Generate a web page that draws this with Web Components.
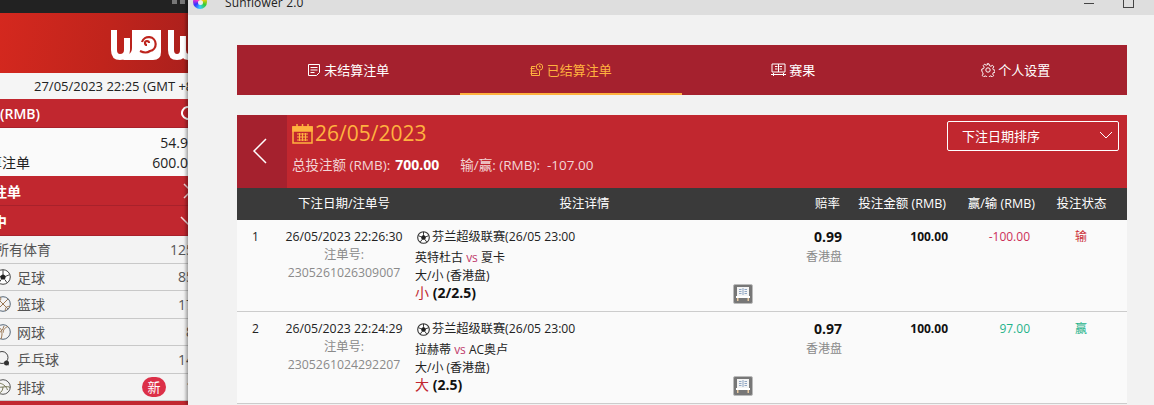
<!DOCTYPE html>
<html lang="zh">
<head>
<meta charset="utf-8">
<title>Sunflower 2.0</title>
<style>
    html, body { margin: 0; height: 405px; overflow: hidden; }
    body {
        display: flex;
        font-family: "Open Sans", "Noto Sans CJK SC", sans-serif;
        font-size: 13px;
    }
</style>
</head>
<body>
<side-panel></side-panel>
<app-window>
    <nav-bar>
        <nav-tab icon="list">未结算注单</nav-tab>
        <nav-tab icon="clock" active>已结算注单</nav-tab>
        <nav-tab icon="board">赛果</nav-tab>
        <nav-tab icon="gear">个人设置</nav-tab>
    </nav-bar>
    <date-head date="26/05/2023" stake="700.00" result="-107.00"></date-head>
    <bet-head></bet-head>
    <bet-row index="1" placed="26/05/2023 22:26:30" ticket="2305261026309007"
        home="英特杜古" away="夏卡" pick="小" line="(2/2.5)" odds="0.99" stake="100.00" profit="-100.00" status="输"></bet-row>
    <bet-row index="2" placed="26/05/2023 22:24:29" ticket="2305261024292207"
        home="拉赫蒂" away="AC奥卢" pick="大" line="(2.5)" odds="0.97" stake="100.00" profit="97.00" status="赢" won></bet-row>
</app-window>

<script>
// icons shared by the nav bar and the rows
const ICONS = {
    list: '<svg width="14" height="14" viewBox="0 0 14 14" fill="none" stroke="currentColor"><path d="M1.5 1.5h11v8l-3 3h-8z"/><path d="M3.5 4.5h7M3.5 7h7M3.5 9.5h4"/></svg>',
    clock: '<svg width="14" height="14" viewBox="0 0 14 14" fill="none" stroke="currentColor"><circle cx="9.5" cy="4" r="3.2"/><path d="M9.5 2.5V4h1.5"/><path d="M5.5 3.5H1.5v9h8V8M.5 5.5h4M.5 8h6M.5 10.5h7"/></svg>',
    board: '<svg width="15" height="14" viewBox="0 0 15 14" fill="none" stroke="currentColor"><path d="M1 1h13v8H1zM0 11.500h15M2.500 10v3M12.500 10v3M4 3.500h2.500M4 6h2.500M8.500 3.500H11M8.500 6H11M7.500 1v8"/></svg>',
    gear: '<svg width="14" height="14" viewBox="0 0 14 14" fill="none" stroke="currentColor"><circle cx="7" cy="7" r="2.200"/><path d="M6 .8h2l.4 1.800 1.500.7 1.600-1 1.300 1.500-1 1.500.5 1.500 1.700.4v2l-1.700.4-.6 1.500 1 1.500-1.400 1.300-1.500-1-1.500.6-.3 1.700H6l-.4-1.700-1.500-.6-1.500 1-1.400-1.400 1-1.500-.6-1.500L.8 8V6l1.800-.4.600-1.500-1-1.500 1.400-1.400 1.500 1 1.500-.6z"/></svg>',
    ball: '<svg width="13" height="13" viewBox="0 0 13 13"><circle cx="6.500" cy="6.500" r="5.800" fill="#fff" stroke="#333" stroke-width="1.100"/><path d="M6.500 3.800l2.600 1.900-1 3H4.900l-1-3z" fill="#222"/><path d="M6.500 1v2.800M9.100 5.700l2.500-1M8.100 8.700l1.500 2.200M4.900 8.700l-1.500 2.200M3.900 5.700l-2.500-1" stroke="#333" fill="none"/></svg>',
    sheet: '<svg width="14" height="14" viewBox="0 0 14 14"><path d="M1 0h12v9H1z" fill="#f4f4f4"/><path d="M7 1v7M3 2.500h2.500M3 4.500h2.500M3 6.500h2.500M8.500 2.500H11M8.500 4.500H11M8.500 6.500H11" stroke="#8fa6c4" fill="none"/><path d="M0 9h14v2H0z" fill="#fff"/><path d="M1 11h1.500v3H1zM11.500 11H13v3h-1.500z" fill="#e8c9a0"/></svg>'
};

class SidePanel extends HTMLElement {
    constructor() {
        super();
        this.attachShadow({ mode: 'open' });
        const sports = [
            ['足球', '85', '<circle cx="8" cy="8" r="7.300" fill="#fff" stroke="#444"/><path d="M8 5l3 2.200-1.100 3.400H6.100L5 7.200z" fill="#222"/><path d="M8 1v4M11 7.200l3.500-1.500M9.900 10.600l2 3M6.100 10.600l-2 3M5 7.200L1.500 5.700" stroke="#444" fill="none"/>'],
            ['篮球', '17', '<circle cx="8" cy="8" r="7.300" fill="none" stroke="#567"/><path d="M2.800 2.800l10.400 10.400M13.200 2.800L2.800 13.200M5.500 1.200c1 3-1 5-4.300 4.500M14.800 10.500c-3-.6-5 1.500-4.300 4.300" stroke="#975" fill="none"/>'],
            ['网球', '8', '<circle cx="8" cy="8" r="7.300" fill="none" stroke="#567"/><path d="M3 2.500c4 2 5 7 3 12.500M13 2.500c-4 1.500-5 4-4.500 6M2 10c3-1 6-4 7-8" stroke="#975" fill="none"/>'],
            ['乒乓球', '14', '<circle cx="7" cy="6.500" r="6" fill="none" stroke="#444"/><path d="M10 11l3.500 3" stroke="#444"/><circle cx="11.500" cy="12" r="2.500" fill="#333"/>'],
            ['排球', '1', '<circle cx="8" cy="8" r="7.300" fill="none" stroke="#555"/><path d="M8 8c-4 0-6.500 1.500-7 2.500M8 8c3.500-.5 6-.5 7 .5M8 8c0 3-1.500 5-4 6.500M4 4c3 .5 7 2.500 8.500 7" stroke="#775" fill="none"/>']
        ];
        const rows = sports.map(([name, count, art]) => `
            <div class="sport">
                <svg width="16" height="16" viewBox="0 0 16 16">${art}</svg>
                <span class="name">${name}</span>
                ${name === '排球' ? '<span class="badge">新</span>' : ''}
                <span class="count">${count}</span>
            </div>`).join('');
        this.shadowRoot.innerHTML = `
            <style>
                :host {
                    display: block;
                    flex: 0 0 188px;
                    width: 188px;
                    height: 405px;
                    overflow: hidden;
                    background: #f3f3f3;
                    font-size: 14px;
                }
                .inner { width: 230px; margin-left: -20px; }
                .top { height: 13px; background: #222; display: flex; justify-content: flex-end; gap: 3px; padding-right: 25px; }
                .top i { width: 5px; height: 4px; background: #777; }
                .brand {
                    height: 60px;
                    box-sizing: border-box;
                    padding: 17px 0 0 131px;
                    background: linear-gradient(100deg, #d8291f 0%, #c0241c 55%, #a61f1d 100%);
                }
                .brand svg { display: block; }
                .clock {
                    height: 26px;
                    line-height: 26px;
                    padding-left: 54px;
                    background: #f5f5f5;
                    color: #222;
                    font-size: 13px;
                    white-space: nowrap;
                    overflow: hidden;
                }
                .bar {
                    display: flex;
                    align-items: center;
                    justify-content: space-between;
                    box-sizing: border-box;
                    background: #c1272f;
                    color: #fff;
                    font-weight: 600;
                    padding-right: 14px;
                    height: 30px;
                    border-bottom: 1px solid #a8212b;
                }
                .bar.first { height: 29px; padding-left: 20px; }
                .bar.menu { padding-left: 13px; }
                .balance { background: #fafafa; color: #222; height: 48px; box-sizing: border-box; padding: 5px 14px 0 8px; }
                .balance div { display: flex; justify-content: space-between; height: 20px; line-height: 20px; }
                .sports { background: #f3f3f3; color: #555; }
                .sport, .all {
                    display: flex;
                    align-items: center;
                    box-sizing: border-box;
                    height: 27.500px;
                    padding: 0 16px 0 15px;
                    border-bottom: 1px solid #c8c8c8;
                }
                .sport .name { margin-left: 6px; }
                .count { margin-left: auto; }
                .badge {
                    margin-left: auto;
                    width: 24px;
                    height: 20px;
                    line-height: 20px;
                    border-radius: 10px;
                    background: #dc3048;
                    color: #fff;
                    text-align: center;
                    font-size: 13px;
                }
                .badge + .count { margin-left: 20px; }
                .foot { height: 4px; background: #c1272f; }
            </style>
            <div class="inner">
                <div class="top"><i></i><i></i></div>
                <div class="brand">
                    <svg width="92" height="30" viewBox="0 0 92 30">
                        <path d="M3 0v20q0 7 6 7 7 0 7-7V8" fill="none" stroke="#fff" stroke-width="6"/>
                        <path d="M21 0h29v22q0 8-8 8H12l6-6q3-2 3-6z" fill="#fff"/>
                        <path d="M29 21q6 3 10 0a7 7 0 1 0-8-9M36 15a2 2 0 1 1 2-2" fill="none" stroke="#bd241c" stroke-width="2.200"/>
                        <path d="M60 0v20q0 7 6 7t6-7V6M72 20q0 7 6 7t6-7V0" fill="none" stroke="#fff" stroke-width="6"/>
                    </svg>
                </div>
                <div class="clock">27/05/2023 22:25 (GMT +8</div>
                <div class="bar first">
                    <span>(RMB)</span>
                    <svg width="16" height="16" viewBox="0 0 16 16" fill="none" stroke="#fff" stroke-width="2"><path d="M14 8a6 6 0 1 1-2-4.500M12 1v3h-3"/></svg>
                </div>
                <div class="balance">
                    <div><span></span><span>54.90</span></div>
                    <div><span>算注单</span><span>600.00</span></div>
                </div>
                <div class="bar menu">
                    <span>注单</span>
                    <svg width="16" height="16" viewBox="0 0 16 16" fill="none" stroke="#f3d9da" stroke-width="1.500"><path d="M4 1l7 7-7 7"/></svg>
                </div>
                <div class="bar menu">
                    <span>中</span>
                    <svg width="16" height="16" viewBox="0 0 16 16" fill="none" stroke="#f3d9da" stroke-width="1.500"><path d="M1 4l7 7 7-7"/></svg>
                </div>
                <div class="sports">
                    <div class="all"><span>所有体育</span><span class="count">125</span></div>
                    ${rows}
                </div>
                <div class="foot"></div>
            </div>
        `;
    }
}

class AppWindow extends HTMLElement {
    constructor() {
        super();
        this.attachShadow({ mode: 'open' });
        this.shadowRoot.innerHTML = `
            <style>
                :host {
                    display: block;
                    flex: 1;
                    height: 405px;
                    overflow: hidden;
                    background: #f2f2f2;
                    box-shadow: -2px 0 3px rgba(0,0,0,.35);
                    position: relative;
                }
                .title {
                    height: 15px;
                    display: flex;
                    background: #dedede;
                    color: #222;
                    font-size: 12px;
                    overflow: hidden;
                }
                .logo {
                    width: 14px;
                    height: 14px;
                    margin: -5px 0 0 5px;
                    border-radius: 50%;
                    background: conic-gradient(#f33, #fc0, #3c3, #3cf, #33f, #f3c, #f33);
                }
                .logo::after { content: ""; display: block; width: 5px; height: 5px; margin: 4.500px; border-radius: 50%; background: #eee; }
                .name { margin: -5px 0 0 18px; line-height: 16px; white-space: nowrap; letter-spacing: .15px; }
                .buttons { margin-left: auto; display: flex; padding-right: 20px; }
                .min { width: 10px; height: 1px; background: #444; margin: 3px 29px 0 0; }
                .max { width: 9px; height: 9px; border: 1px solid #444; margin-top: -3px; }
                .body { padding: 30px 27px 0 49px; }
            </style>
            <div class="title">
                <span class="logo"></span>
                <span class="name">Sunflower 2.0</span>
                <span class="buttons"><i class="min"></i><i class="max"></i></span>
            </div>
            <div class="body"><slot></slot></div>
        `;
    }
}

class NavBar extends HTMLElement {
    constructor() {
        super();
        this.attachShadow({ mode: 'open' });
        this.shadowRoot.innerHTML = `
            <style>
                :host {
                    display: grid;
                    grid-template-columns: repeat(4, 1fr);
                    height: 50px;
                    background: #a5212e;
                }
            </style>
            <slot></slot>
        `;
    }
}

class NavTab extends HTMLElement {
    constructor() {
        super();
        this.attachShadow({ mode: 'open' });
        this.shadowRoot.innerHTML = `
            <style>
                :host {
                    display: flex;
                    align-items: center;
                    justify-content: center;
                    gap: 3px;
                    box-sizing: border-box;
                    color: #fff;
                    font-size: 13px;
                    padding-top: 1px;
                    border-bottom: 2px solid transparent;
                }
                :host([active]) { color: #ffb23f; border-bottom-color: #ffb23f; }
                svg { display: block; }
            </style>
            ${ICONS[this.getAttribute('icon')]}
            <span><slot></slot></span>
        `;
    }
}

class DateHead extends HTMLElement {
    constructor() {
        super();
        this.attachShadow({ mode: 'open' });
        this.shadowRoot.innerHTML = `
            <style>
                :host {
                    display: flex;
                    margin-top: 20px;
                    height: 73px;
                    background: #c1272f;
                    color: #f3d5d6;
                }
                .back { flex: 0 0 50px; background: #a5212e; display: flex; align-items: center; justify-content: center; }
                .back svg { margin: 0 4px 1px 0; }
                .info { flex: 1; padding: 4px 0 0 5px; }
                .day { display: flex; align-items: center; gap: 2px; color: #ffb23f; font-size: 21px; height: 28px; }
                .sum { margin-top: 8px; display: flex; gap: 21px; line-height: 20px; font-size: 13.500px; }
                b { color: #fff; font-size: 14px; margin-left: 5px; }
                .pick {
                    width: 151px;
                    height: 28px;
                    margin: 6px 8px 0 0;
                    border: 1px solid #fff;
                    border-radius: 2px;
                    display: flex;
                    align-items: center;
                    justify-content: space-between;
                    padding: 0 5px 2px 14px;
                    box-sizing: content-box;
                    height: 26px;
                    color: #fff;
                }
            </style>
            <div class="back">
                <svg width="16" height="26" viewBox="0 0 16 26" fill="none" stroke="#fff" stroke-width="1.500"><path d="M14 1L2 13l12 12"/></svg>
            </div>
            <div class="info">
                <div class="day">
                    <svg width="21" height="21" viewBox="0 0 21 21" fill="none" stroke="#ffb23f" stroke-width="1.500">
                        <path d="M1 4h19v16H1z"/>
                        <path d="M1 4h19v4H1z" fill="#ffb23f"/>
                        <path d="M5 1v4M10.500 1v4M16 1v4" />
                        <path d="M5 11h11M5 14h11M5 17h11M7.500 10v8M10.500 10v8M13.500 10v8" stroke-width="1.200"/>
                    </svg>
                    <span>${this.getAttribute('date')}</span>
                </div>
                <div class="sum">
                    <span>总投注额 (RMB):<b>${this.getAttribute('stake')}</b></span>
                    <span>输/赢: (RMB): &nbsp;${this.getAttribute('result')}</span>
                </div>
            </div>
            <div class="pick">
                <span>下注日期排序</span>
                <svg width="14" height="8" viewBox="0 0 14 8" fill="none" stroke="#fff"><path d="M1 1l6 6 6-6"/></svg>
            </div>
        `;
    }
}

const GRID = 'display: grid; grid-template-columns: 48px 130px 339px 91px 105px 85px 92px;';

class BetHead extends HTMLElement {
    constructor() {
        super();
        this.attachShadow({ mode: 'open' });
        this.shadowRoot.innerHTML = `
            <style>
                :host {
                    ${GRID}
                    height: 32px;
                    line-height: 32px;
                    background: #3a3a3a;
                    color: #fff;
                    font-size: 12.500px;
                    white-space: nowrap;
                }
                .date { text-align: center; padding-right: 12px; }
                .detail { text-align: center; }
                .odds { text-align: right; padding-right: 5px; }
                .stake { text-align: right; padding-right: 4px; }
                .pl { text-align: right; }
                .status { text-align: center; padding-left: 1px; }
            </style>
            <span></span>
            <span class="date">下注日期/注单号</span>
            <span class="detail">投注详情</span>
            <span class="odds">赔率</span>
            <span class="stake">投注金额 (RMB)</span>
            <span class="pl">赢/输 (RMB)</span>
            <span class="status">投注状态</span>
        `;
    }
}

class BetRow extends HTMLElement {
    constructor() {
        super();
        this.attachShadow({ mode: 'open' });
        const a = (n) => this.getAttribute(n);
        const won = this.hasAttribute('won');
        this.shadowRoot.innerHTML = `
            <style>
                :host {
                    ${GRID}
                    box-sizing: border-box;
                    height: 92px;
                    padding-top: 8px;
                    background: #fafafa;
                    border-bottom: 1px solid #ccc;
                    color: #222;
                    font-size: 12px;
                    white-space: nowrap;
                }
                .idx { padding-left: 15px; line-height: 18px; }
                .date { text-align: center; padding-right: 12px; line-height: 18px; font-size: 12.300px; }
                .date small { display: block; font-size: 12.300px; color: #8a8a8a; }
                .detail { position: relative; line-height: 18px; }
                .league { display: flex; align-items: center; gap: 2px; padding-left: 2px; height: 18px; margin-bottom: 3px; font-size: 12.200px; }
                .vs { color: #c0396b; }
                .pick { font-size: 14px; font-weight: 700; color: #111; margin-top: -1px; }
                .pick em { font-style: normal; font-weight: 400; color: #c1272f; }
                .board {
                    position: absolute;
                    right: 1px;
                    top: 56px;
                    width: 18px;
                    height: 18px;
                    background: #777;
                    border: 1px solid #bbb;
                    border-radius: 2px;
                    display: flex;
                    align-items: center;
                    justify-content: center;
                }
                .odds { text-align: right; padding-right: 3px; line-height: 18px; }
                .odds b { display: block; font-size: 14px; color: #111; }
                .odds span { display: block; color: #8a8a8a; margin-top: 2px; }
                .stake { text-align: right; font-weight: 700; padding-right: 2px; color: #111; line-height: 18px; }
                .pl { text-align: right; padding-right: 5px; line-height: 18px; color: ${won ? '#1fb38a' : '#cc2f58'}; }
                .status { text-align: center; line-height: 18px; color: ${won ? '#1fb38a' : '#cc2f38'}; }
            </style>
            <span class="idx">${a('index')}</span>
            <span class="date">${a('placed')}<small>注单号:</small><small>${a('ticket')}</small></span>
            <div class="detail">
                <div class="league">${ICONS.ball}<span>芬兰超级联赛(26/05 23:00</span></div>
                <div>${a('home')} <span class="vs">vs</span> ${a('away')}</div>
                <div>大/小 (香港盘)</div>
                <div class="pick"><em>${a('pick')}</em> ${a('line')}</div>
                <span class="board">${ICONS.sheet}</span>
            </div>
            <div class="odds"><b>${a('odds')}</b><span>香港盘</span></div>
            <span class="stake">${a('stake')}</span>
            <span class="pl">${a('profit')}</span>
            <span class="status">${a('status')}</span>
        `;
    }
}

customElements.define('side-panel', SidePanel);
customElements.define('app-window', AppWindow);
customElements.define('nav-bar', NavBar);
customElements.define('nav-tab', NavTab);
customElements.define('date-head', DateHead);
customElements.define('bet-head', BetHead);
customElements.define('bet-row', BetRow);
</script>
</body>
</html>
